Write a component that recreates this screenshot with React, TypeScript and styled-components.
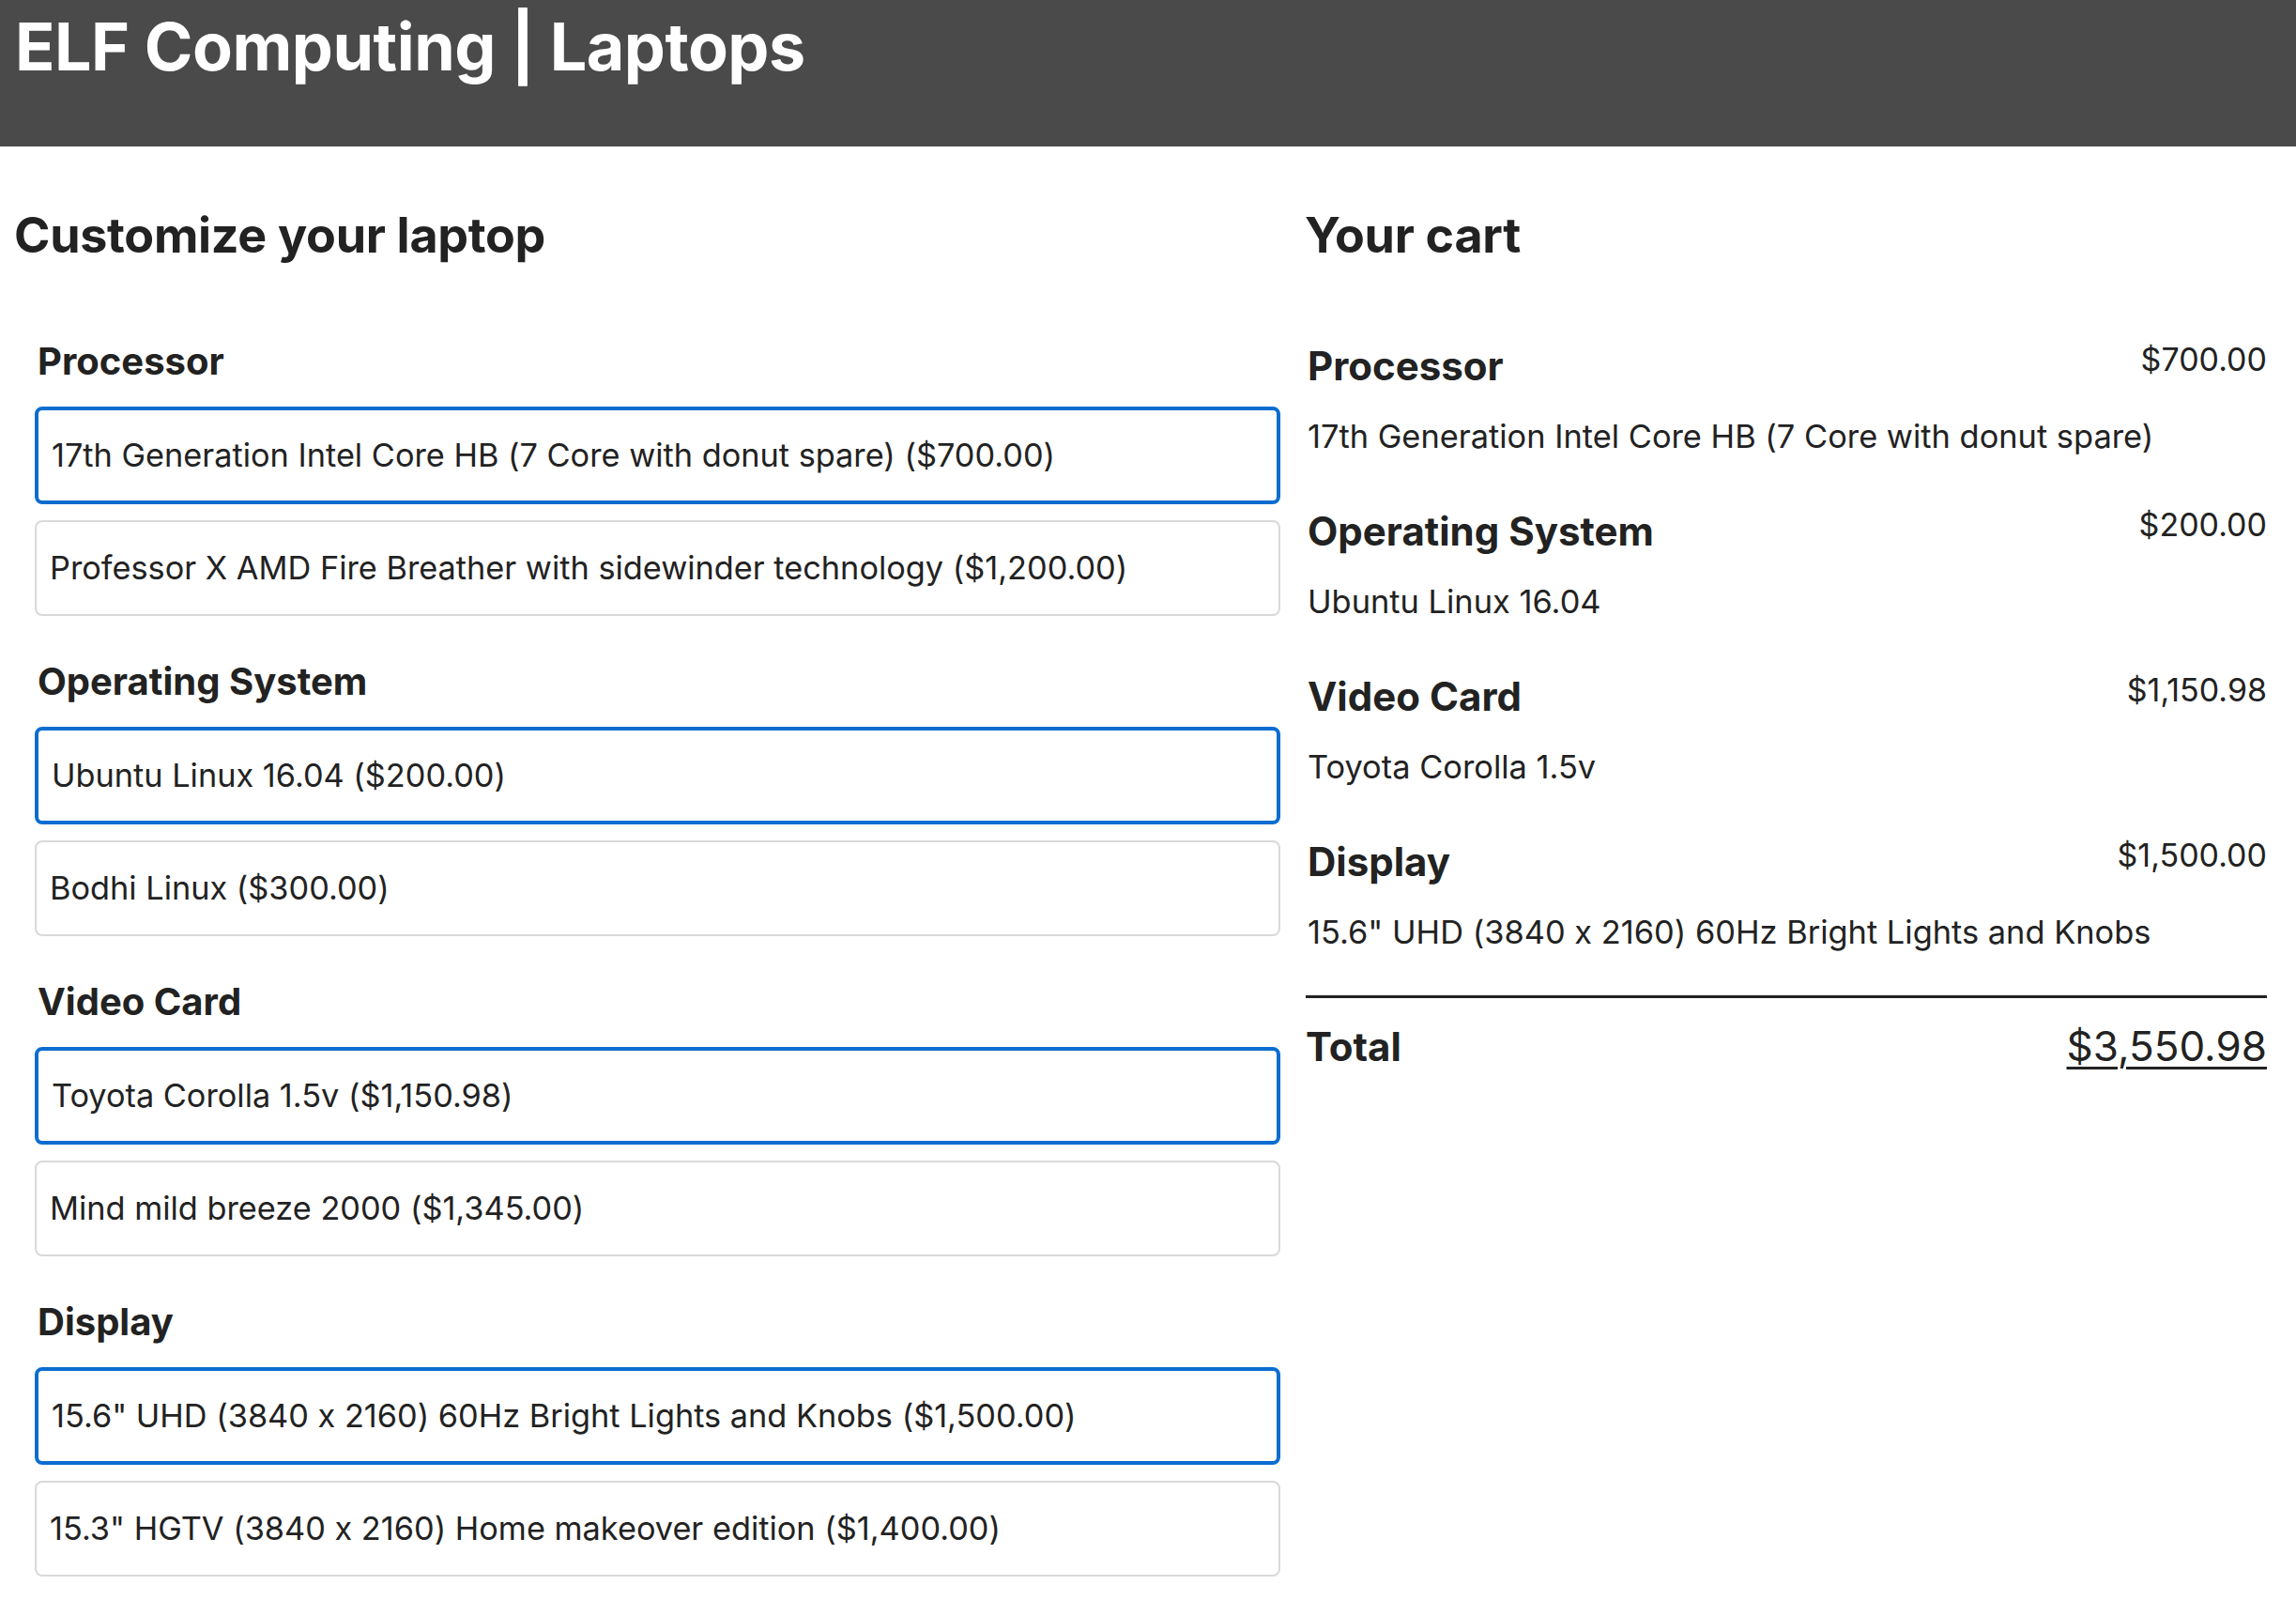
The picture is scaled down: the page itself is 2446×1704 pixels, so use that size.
import React from "react";
import styled, { createGlobalStyle } from "styled-components";

const GlobalStyle = createGlobalStyle`
  html, body {
    margin: 0;
    padding: 0;
    background: #ffffff;
    color: #222222;
    font-family: Inter, "Liberation Sans", Roboto, sans-serif;
    font-feature-settings: "calt" 0;
    -webkit-font-smoothing: antialiased;
  }
  * { box-sizing: border-box; }
`;

type Option = { name: string; cost: number };
type Feature = { title: string; options: Option[]; selected: number };

const FEATURES: Feature[] = [
  {
    title: "Processor",
    selected: 0,
    options: [
      { name: "17th Generation Intel Core HB (7 Core with donut spare)", cost: 700 },
      { name: "Professor X AMD Fire Breather with sidewinder technology", cost: 1200 },
    ],
  },
  {
    title: "Operating System",
    selected: 0,
    options: [
      { name: "Ubuntu Linux 16.04", cost: 200 },
      { name: "Bodhi Linux", cost: 300 },
    ],
  },
  {
    title: "Video Card",
    selected: 0,
    options: [
      { name: "Toyota Corolla 1.5v", cost: 1150.98 },
      { name: "Mind mild breeze 2000", cost: 1345 },
    ],
  },
  {
    title: "Display",
    selected: 0,
    options: [
      { name: '15.6" UHD (3840 x 2160) 60Hz Bright Lights and Knobs', cost: 1500 },
      { name: '15.3" HGTV (3840 x 2160) Home makeover edition', cost: 1400 },
    ],
  },
];

const USCurrency = new Intl.NumberFormat("en-US", { style: "currency", currency: "USD" });

const Header = styled.header`
  height: 156px;
  background-color: #4a4a4a;
  color: #ffffff;
  padding: 15px 16px 0;
`;

const Title = styled.h1`
  margin: 0;
  font-size: 70px;
  line-height: 70px;
  font-weight: 700;
  letter-spacing: -0.5px;
`;

const Main = styled.main`
  display: grid;
  grid-template-columns: minmax(0, 1349fr) minmax(0, 1024fr);
  column-gap: 27px;
  padding: 64px 31px 40px 15px;
`;

const Column = styled.section`
  display: flex;
  flex-direction: column;
`;

const SectionTitle = styled.h2`
  margin: 0;
  font-size: 52px;
  line-height: 62px;
  font-weight: 700;
  letter-spacing: -0.3px;
`;

const CartTitle = styled(SectionTitle)`
  margin-left: -1px;
`;

const FeatureList = styled.div`
  display: flex;
  flex-direction: column;
  gap: 46px;
  margin-top: 79px;
  padding-left: 22px;
`;

const FeatureSet = styled.fieldset`
  margin: 0;
  padding: 0;
  border: none;
  display: flex;
  flex-direction: column;
  gap: 17px;
`;

const FeatureName = styled.h3`
  margin: 0 0 7px;
  padding-left: 3px;
  font-size: 40px;
  line-height: 48px;
  font-weight: 700;
`;

const OptionLabel = styled.label<{ $selected: boolean }>`
  display: block;
  font-size: 34.3px;
  line-height: 40px;
  border-radius: 8px;
  cursor: pointer;
  border: ${(p) => (p.$selected ? "4px solid #0b6dd0" : "2px solid #d9d9d9")};
  padding: ${(p) => (p.$selected ? "28px 14px" : "29px 14px")};
`;

const CartList = styled.div`
  display: flex;
  flex-direction: column;
  gap: 56px;
  margin-top: 83px;
`;

const CartItem = styled.div`
  display: flex;
  flex-wrap: wrap;
  justify-content: space-between;
  align-items: flex-start;
  padding-left: 2px;
`;

const CartLabel = styled.div`
  font-size: 42px;
  line-height: 50px;
  font-weight: 700;
`;

const CartCost = styled.div`
  font-size: 34px;
  line-height: 36px;
`;

const CartValue = styled.div`
  flex-basis: 100%;
  margin-top: 30px;
  font-size: 34.4px;
  line-height: 40px;
`;

const TotalRow = styled.div`
  margin-top: 47px;
  border-top: 3px solid #222222;
  padding-top: 26px;
  display: flex;
  justify-content: space-between;
  align-items: baseline;
`;

const TotalLabel = styled.div`
  font-size: 42px;
  line-height: 50px;
  font-weight: 700;
`;

const TotalValue = styled.div`
  font-size: 44px;
  line-height: 50px;
  text-decoration: underline;
  text-decoration-thickness: 3px;
  text-underline-offset: 6px;
`;

export default function App() {
  const total = FEATURES.reduce((sum, f) => sum + f.options[f.selected].cost, 0);
  return (
    <>
      <GlobalStyle />
      <Header>
        <Title>ELF Computing | Laptops</Title>
      </Header>
      <Main>
        <Column>
          <SectionTitle>Customize your laptop</SectionTitle>
          <FeatureList>
            {FEATURES.map((f) => (
              <FeatureSet key={f.title}>
                <FeatureName>{f.title}</FeatureName>
                {f.options.map((o, i) => (
                  <OptionLabel key={o.name} $selected={i === f.selected}>
                    {o.name} ({USCurrency.format(o.cost)})
                  </OptionLabel>
                ))}
              </FeatureSet>
            ))}
          </FeatureList>
        </Column>
        <Column>
          <CartTitle>Your cart</CartTitle>
          <CartList>
            {FEATURES.map((f) => (
              <CartItem key={f.title}>
                <CartLabel>{f.title}</CartLabel>
                <CartCost>{USCurrency.format(f.options[f.selected].cost)}</CartCost>
                <CartValue>{f.options[f.selected].name}</CartValue>
              </CartItem>
            ))}
          </CartList>
          <TotalRow>
            <TotalLabel>Total</TotalLabel>
            <TotalValue>{USCurrency.format(total)}</TotalValue>
          </TotalRow>
        </Column>
      </Main>
    </>
  );
}
